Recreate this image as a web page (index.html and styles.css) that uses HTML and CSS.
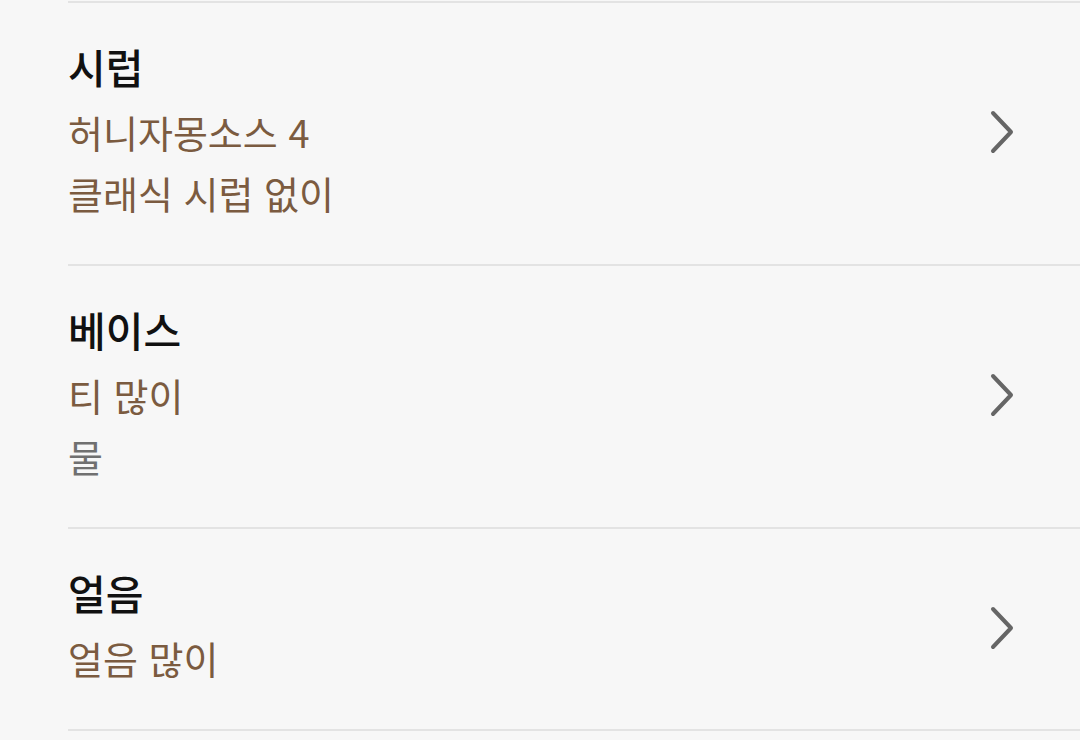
FILE: index.html
```html
<!DOCTYPE html>
<html lang="ko">
<head>
    <meta charset="UTF-8">
    <meta name="viewport" content="width=device-width, initial-scale=1.0">
    <title>옵션</title>
    <link rel="stylesheet" href="styles.css">
</head>
<body>

<div class="option-list">
    <div class="option-row">
        <div class="option-text">
            <div class="option-title">시럽</div>
            <div class="option-value">허니자몽소스 4</div>
            <div class="option-value">클래식 시럽 없이</div>
        </div>
        <svg class="chevron" viewBox="0 0 24 44"><path d="M3 3 L21 22 L3 41"/></svg>
    </div>

    <div class="option-row">
        <div class="option-text">
            <div class="option-title">베이스</div>
            <div class="option-value">티 많이</div>
            <div class="option-value muted">물</div>
        </div>
        <svg class="chevron" viewBox="0 0 24 44"><path d="M3 3 L21 22 L3 41"/></svg>
    </div>

    <div class="option-row">
        <div class="option-text">
            <div class="option-title">얼음</div>
            <div class="option-value">얼음 많이</div>
        </div>
        <svg class="chevron" viewBox="0 0 24 44"><path d="M3 3 L21 22 L3 41"/></svg>
    </div>
</div>

</body>
</html>
```

FILE: styles.css
```css
body {
    margin: 0;
    background-color: #f7f7f7;
    font-family: "Noto Sans CJK KR", "Noto Sans", sans-serif;
}
.option-list {
    padding-left: 68px;
    padding-top: 1px;
}
.option-row {
    display: flex;
    align-items: center;
    border-top: 2px solid #e3e3e3;
    padding: 28px 0 41px 0;
}
.option-row:last-child {
    border-bottom: 2px solid #e3e3e3;
}
.option-text {
    flex: 1;
}
.option-title {
    font-size: 41px;
    font-weight: 500;
    line-height: 70px;
    color: #111111;
}
.option-value {
    font-size: 38px;
    line-height: 61px;
    color: #7b5b40;
}
.option-value.muted {
    color: #707070;
}
.chevron {
    width: 24px;
    height: 44px;
    margin-right: 66px;
    margin-top: 10px;
    fill: none;
    stroke: #666666;
    stroke-width: 4;
    stroke-linecap: round;
    stroke-linejoin: round;
}
```
